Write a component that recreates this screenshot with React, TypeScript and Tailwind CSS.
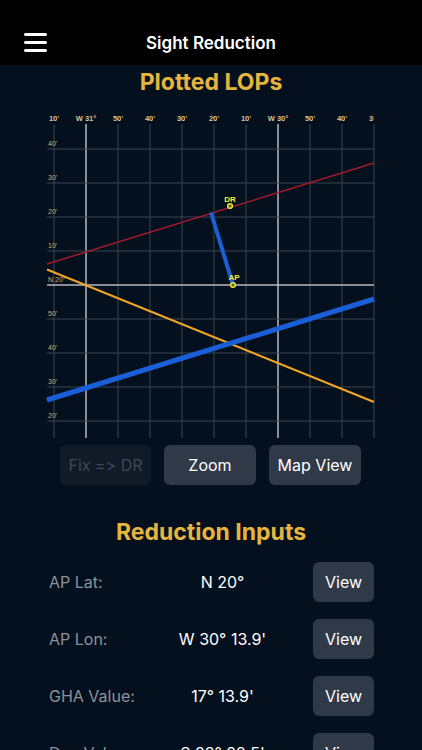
import React from "react";

const vx = [54, 86, 118, 150, 182, 214, 246, 278, 310, 342, 374];
const topLabels = ["10'", "W 31°", "50'", "40'", "30'", "20'", "10'", "W 30°", "50'", "40'", "30'"];
const hy = [149, 183, 217, 251, 285, 319, 353, 387, 421];
const leftLabels = ["40'", "30'", "20'", "10'", "N 20°", "50'", "40'", "30'", "20'"];

function Chart() {
  return (
    <svg width="422" height="335" viewBox="0 105 422 335" className="block">
      <defs>
        <clipPath id="clip">
          <rect x="40" y="105" width="335" height="335" />
        </clipPath>
        <clipPath id="clipText">
          <rect x="40" y="105" width="333.5" height="335" />
        </clipPath>
      </defs>
      <g clipPath="url(#clip)" fontFamily="Liberation Sans, Arial, sans-serif">
        {vx.map((x, i) => (
          <line
            key={"v" + i}
            x1={x}
            x2={x}
            y1={124}
            y2={438}
            stroke={i === 1 || i === 7 ? "#b4bac2" : "#3a4454"}
            strokeWidth={i === 1 || i === 7 ? 1.5 : 1}
          />
        ))}
        {hy.map((y, i) => (
          <line
            key={"h" + i}
            x1={47}
            x2={374}
            y1={y}
            y2={y}
            stroke={i === 4 ? "#b4bac2" : "#3a4454"}
            strokeWidth={i === 4 ? 1.5 : 1}
          />
        ))}
        <g clipPath="url(#clipText)">
          {vx.map((x, i) => (
            <text
              key={"t" + i}
              x={x}
              y={120.5}
              textAnchor="middle"
              fontSize="7.5"
              fontWeight="bold"
              fill="#d6c79a"
            >
              {topLabels[i]}
            </text>
          ))}
        </g>
        {hy.map((y, i) => (
          <text
            key={"l" + i}
            x={48}
            y={y - 3}
            fontSize="7"
            fill="#c9b074"
          >
            {leftLabels[i]}
          </text>
        ))}
        <line x1={47} y1={264} x2={374} y2={163} stroke="#a01c2c" strokeWidth={1.5} />
        <line x1={47} y1={269.5} x2={374} y2={402} stroke="#f2a623" strokeWidth={2} />
        <line x1={47} y1={400} x2={374} y2={299} stroke="#1b5fd8" strokeWidth={5} />
        <line x1={211} y1={212.5} x2={233} y2={285} stroke="#1b5fd8" strokeWidth={4} />
        <circle cx={230} cy={206} r={2.4} fill="#6a6a20" stroke="#f2f23c" strokeWidth={1.3} />
        <circle cx={233} cy={285} r={2.4} fill="#6a6a20" stroke="#f2f23c" strokeWidth={1.3} />
        <text x={230} y={202} textAnchor="middle" fontSize="8" fontWeight="bold" fill="#f2f23c">
          DR
        </text>
        <text x={234} y={280} textAnchor="middle" fontSize="8" fontWeight="bold" fill="#f2f23c">
          AP
        </text>
      </g>
    </svg>
  );
}

function Row({ label, value }: { label: string; value: string }) {
  return (
    <div className="flex items-center h-[40px] mb-[17px] pl-[49px] pr-[48px]">
      <div className="w-[105px] text-[16px] text-[#8b929a]">{label}</div>
      <div className="flex-1 text-center text-[16px] text-white pr-[22px]">{value}</div>
      <div className="w-[61px] h-[40px] rounded-[6px] bg-[#2f3947] flex items-center justify-center text-[16px] text-white">
        View
      </div>
    </div>
  );
}

export default function App() {
  return (
    <div
      className="w-[422px] h-[750px] overflow-hidden bg-[#05101e] [font-feature-settings:'calt'_0]"
      style={{ fontFamily: "Inter, 'Liberation Sans', sans-serif" }}
    >
      <div className="h-[65px] bg-black relative flex items-center justify-center">
        <div className="absolute left-[24px] top-[33px] w-[23px] flex flex-col gap-[5px]">
          <div className="h-[3px] bg-white rounded-full" />
          <div className="h-[3px] bg-white rounded-full" />
          <div className="h-[3px] bg-white rounded-full" />
        </div>
        <div className="text-white text-[17px] font-semibold mt-[22px]">Sight Reduction</div>
      </div>
      <div className="h-[40px] flex items-start justify-center text-[23px] font-bold text-[#e6b63c] leading-[34px]">
        Plotted LOPs
      </div>
      <Chart />
      <div className="flex justify-center gap-[13px] mt-[5px] pr-[1px]">
        <div className="w-[91px] h-[40px] rounded-[6px] bg-[#111b28] flex items-center justify-center text-[16px] text-[#3f4856]">
          Fix =&gt; DR
        </div>
        <div className="w-[92px] h-[40px] rounded-[6px] bg-[#2f3947] flex items-center justify-center text-[16px] text-white">
          Zoom
        </div>
        <div className="w-[92px] h-[40px] rounded-[6px] bg-[#2f3947] flex items-center justify-center text-[16px] text-white">
          Map View
        </div>
      </div>
      <div className="h-[32px] mt-[31px] flex items-center justify-center text-[23px] font-bold text-[#e6b63c]">
        Reduction Inputs
      </div>
      <div className="mt-[14px]">
        <Row label="AP Lat:" value="N 20°" />
        <Row label="AP Lon:" value="W 30° 13.9'" />
        <Row label="GHA Value:" value="17° 13.9'" />
        <Row label="Dec Value:" value="S 23° 22.5'" />
      </div>
    </div>
  );
}
